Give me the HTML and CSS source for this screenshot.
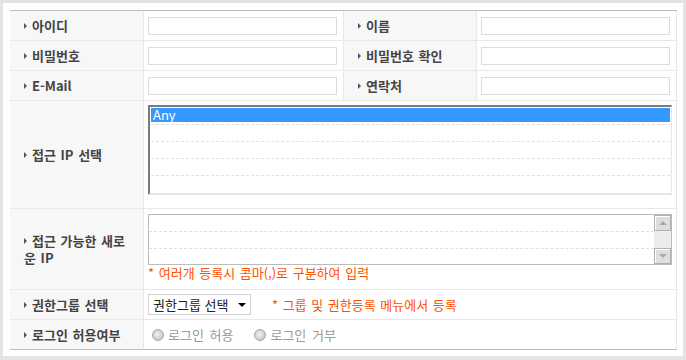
FILE: index.html
```html
<!DOCTYPE html>
<html lang="ko">
<head>
    <meta charset="UTF-8">
    <meta name="viewport" content="width=device-width, initial-scale=1.0">
    <title>관리자 등록</title>
    <link rel="stylesheet" href="styles.css">
</head>
<body>

<div class="frame">
    <table class="form-table">
        <colgroup>
            <col class="col-label1">
            <col class="col-value">
            <col class="col-label2">
            <col class="col-value">
        </colgroup>
        <tr>
            <th><span class="bullet"></span>아이디</th>
            <td><input type="text" class="text-input"></td>
            <th><span class="bullet"></span>이름</th>
            <td><input type="text" class="text-input"></td>
        </tr>
        <tr>
            <th><span class="bullet"></span>비밀번호</th>
            <td><input type="password" class="text-input"></td>
            <th><span class="bullet"></span>비밀번호 확인</th>
            <td><input type="password" class="text-input"></td>
        </tr>
        <tr>
            <th><span class="bullet"></span>E-Mail</th>
            <td><input type="text" class="text-input"></td>
            <th><span class="bullet"></span>연락처</th>
            <td><input type="text" class="text-input"></td>
        </tr>
        <tr class="row-ip">
            <th><span class="bullet"></span>접근 IP 선택</th>
            <td colspan="3" class="cell-top">
                <ul class="listbox">
                    <li><span class="opt selected">Any</span></li>
                    <li><span class="opt"></span></li>
                    <li><span class="opt"></span></li>
                    <li><span class="opt"></span></li>
                </ul>
            </td>
        </tr>
        <tr class="row-newip">
            <th><span class="bullet"></span>접근 가능한 새로운 IP</th>
            <td colspan="3" class="cell-top">
                <div class="memo">
                    <div class="memo-lines">
                        <div class="memo-line"></div>
                        <div class="memo-line"></div>
                        <div class="memo-line"></div>
                    </div>
                    <div class="scrollbar">
                        <span class="sb-btn sb-up"></span>
                        <span class="sb-track"></span>
                        <span class="sb-btn sb-down"></span>
                    </div>
                </div>
                <p class="note">* 여러개 등록시 콤마(,)로 구분하여 입력</p>
            </td>
        </tr>
        <tr>
            <th><span class="bullet"></span>권한그룹 선택</th>
            <td colspan="3">
                <div class="inline-row">
                    <div class="dropdown">권한그룹 선택<span class="caret"></span></div>
                    <span class="note note-side">* 그룹 및 권한등록 메뉴에서 등록</span>
                </div>
            </td>
        </tr>
        <tr class="row-last">
            <th><span class="bullet"></span>로그인 허용여부</th>
            <td colspan="3">
                <div class="inline-row">
                    <label class="radio"><span class="radio-dot"></span>로그인 허용</label>
                    <label class="radio"><span class="radio-dot"></span>로그인 거부</label>
                </div>
            </td>
        </tr>
    </table>
</div>

</body>
</html>
```

FILE: styles.css
```css
* {
    box-sizing: border-box;
}
body {
    margin: 0;
    font-family: "Noto Sans CJK KR", "Noto Sans", sans-serif;
    font-size: 13px;
    color: #444;
    background-color: #fff;
}
.frame {
    height: 360px;
    border: 3px solid #e4e4e4;
    border-bottom-width: 4px;
    padding: 7px 6px 0 7px;
}
.form-table {
    width: 667px;
    table-layout: fixed;
    border-collapse: separate;
    border-spacing: 0;
    border-top: 1px solid #bdbdbd;
}
.col-label1 {
    width: 134px;
}
.col-label2 {
    width: 133px;
}
.col-value {
    width: 200px;
}
.form-table th,
.form-table td {
    height: 30px;
    padding: 0 4px;
    border-bottom: 1px solid #e8e8e8;
    border-right: 1px solid #e8e8e8;
    vertical-align: middle;
}
.form-table th {
    padding-left: 14px;
    padding-right: 10px;
    background-color: #f7f7f7;
    text-align: left;
    font-weight: bold;
    color: #444;
    line-height: 17px;
    word-break: break-all;
    word-spacing: 1px;
}
.form-table .row-last th,
.form-table .row-last td {
    border-bottom-color: #bdbdbd;
}
.bullet {
    display: inline-block;
    width: 0;
    height: 0;
    border-left: 3px solid #555;
    border-top: 3px solid transparent;
    border-bottom: 3px solid transparent;
    margin-right: 5px;
    vertical-align: 2px;
}
.text-input {
    display: block;
    width: 189px;
    height: 18px;
    margin: 0;
    border: 1px solid #dcdcdc;
    background-color: #fff;
}
.cell-top {
    vertical-align: top !important;
}
.row-ip th,
.row-ip td {
    height: 108px;
}
.row-ip td {
    padding-top: 4px;
}
.listbox {
    list-style: none;
    margin: 0;
    padding: 1px 1px 0 1px;
    height: 90px;
    border-top: 2px solid #7a7a7a;
    border-left: 2px solid #7a7a7a;
    border-right: 1px solid #e6e6e6;
    border-bottom: 2px solid #e6e6e6;
    background-color: #fff;
}
.listbox li {
    padding-bottom: 2px;
    border-bottom: 1px dashed #e2e2e2;
}
.opt {
    display: block;
    height: 14px;
    line-height: 14px;
    padding-left: 2px;
}
.opt.selected {
    background-color: #3399ff;
    color: #fff;
}
.row-newip th,
.row-newip td {
    height: 81px;
}
.row-newip td {
    padding-top: 5px;
}
.memo {
    display: flex;
    height: 51px;
    border: 1px solid #bbb;
    background-color: #fff;
}
.memo-lines {
    flex: 1;
}
.memo-line {
    height: 17px;
    border-bottom: 1px dashed #e0e0e0;
}
.memo-line:last-child {
    border-bottom: none;
}
.scrollbar {
    width: 17px;
    display: flex;
    flex-direction: column;
    background-color: #ececec;
}
.sb-btn {
    position: relative;
    height: 16px;
    background-color: #dedede;
    border: 1px solid #b0b0b0;
    box-shadow: inset 1px 1px 0 #fff;
}
.sb-btn::after {
    content: "";
    position: absolute;
    left: 4px;
    top: 5px;
    border-left: 4px solid transparent;
    border-right: 4px solid transparent;
}
.sb-up::after {
    border-bottom: 4px solid #a4aab2;
}
.sb-down::after {
    border-top: 4px solid #a4aab2;
}
.sb-track {
    flex: 1;
}
.note {
    margin: 0;
    line-height: 16px;
    color: #ff5000;
    word-spacing: 1px;
}
.inline-row {
    display: flex;
    align-items: center;
}
.dropdown {
    display: flex;
    align-items: center;
    width: 103px;
    height: 21px;
    padding-left: 4px;
    border: 1px solid #d0d0d0;
    background-color: #fff;
    color: #222;
}
.caret {
    margin-left: auto;
    margin-right: 4px;
    border-left: 4px solid transparent;
    border-right: 4px solid transparent;
    border-top: 4px solid #000;
}
.note-side {
    margin-left: 21px;
}
.radio {
    display: flex;
    align-items: center;
    color: #999;
    margin-left: 4px;
    margin-right: 17px;
    word-spacing: 2px;
}
.radio-dot {
    width: 12px;
    height: 12px;
    margin-right: 4px;
    border: 1px solid #a8a8a8;
    border-radius: 50%;
    background: radial-gradient(circle at 45% 45%, #f4f4f4 0, #dcdcdc 3px, #c4c4c4 6px);
}
```
